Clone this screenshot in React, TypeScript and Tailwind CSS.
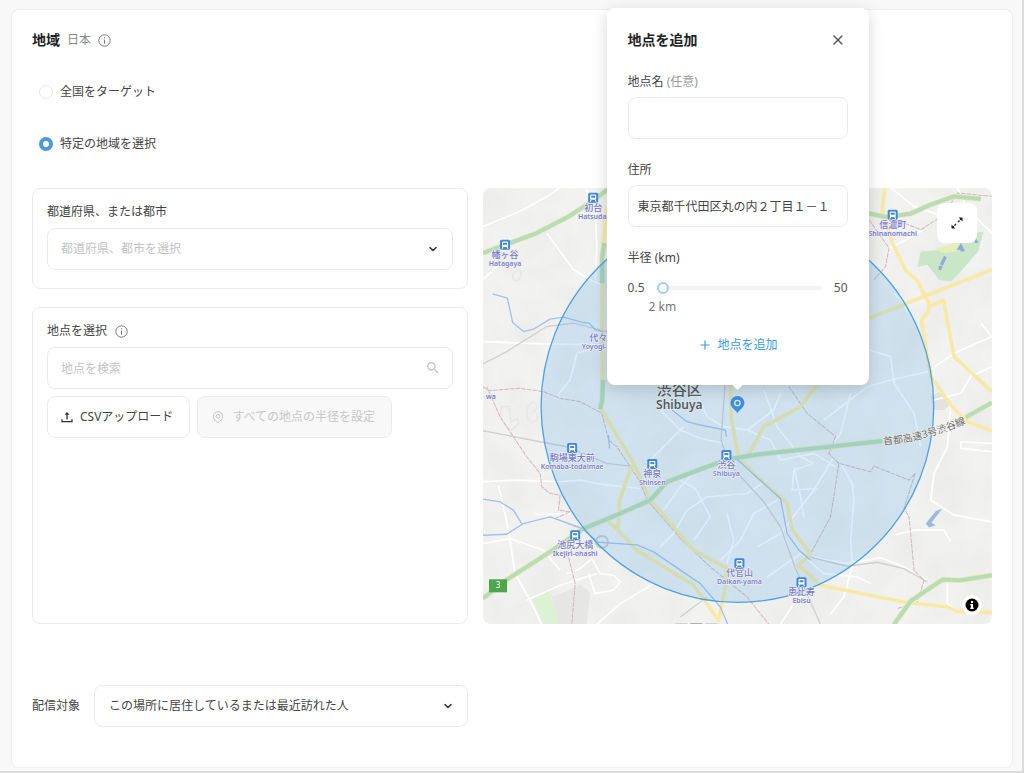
import { useState } from "react";
import type { ReactNode } from "react";
import { ChevronDown, Plus, X } from "lucide-react";
import { MdSearch } from "react-icons/md";

const FIELD = "h-[42px] w-full rounded-lg border border-[#ebebeb] bg-white text-xs text-[#444] outline-none placeholder:text-[#c4c4c4]";
const RADIO = "size-[14px] shrink-0 appearance-none rounded-full border border-[#e6e6e6] bg-white checked:border-4 checked:border-[#4a98e6]";

const STATIONS = [
  { ja: "初台", en: "Hatsudai", x: 110, y: 10 },
  { ja: "幡ヶ谷", en: "Hatagaya", x: 22, y: 57 },
  { ja: "信濃町", en: "Shinanomachi", x: 409, y: 27 },
  { ja: "駒場東大前", en: "Komaba-todaimae", x: 89, y: 260 },
  { ja: "神泉", en: "Shinsen", x: 169, y: 276 },
  { ja: "渋谷", en: "Shibuya", x: 243, y: 267 },
  { ja: "池尻大橋", en: "Ikejiri-ohashi", x: 92, y: 347 },
  { ja: "代官山", en: "Daikan-yama", x: 256, y: 375 },
  { ja: "恵比寿", en: "Ebisu", x: 318, y: 394 },
];

// Small streets, drawn in white
const STREETS = [
  "M9 140L120 95L210 45L240 24",
  "M200 160L240 215L280 270L340 305L365 315",
  "M320 30L345 100L350 200L345 300",
  "M9 300L60 250",
  "M9 485L180 492L370 495",
  "M225 655L270 600L290 520L365 500",
  "M9 905L110 900L240 905L300 900L360 912L480 925",
  "M55 915L75 1000L90 1080L105 1180L150 1260L185 1332",
  "M9 1090L90 1075L190 1110L240 1170",
  "M165 1003L270 1000",
  "M260 1180L300 1165L335 1135L360 1180L400 1185L420 1205L400 1230L345 1240L325 1180",
  "M140 1260L240 1215L350 1180",
  "M350 1332L420 1270L520 1210",
  "M540 690L600 750L660 775L730 790",
  "M610 740L560 790L500 850",
  "M650 640L680 710L730 740L800 750L880 690L900 640",
  "M850 630L890 740L960 830L1000 850",
  "M800 750L870 780L900 840L1000 820L1065 860",
  "M540 1100L580 1060L620 990L680 950L800 940L860 900",
  "M600 900L645 925L690 1010L640 1080",
  "M550 990L600 920L640 880",
  "M720 1140L780 1080L820 1000L890 960",
  "M740 1000L760 1080L740 1150",
  "M830 1100L900 1060L1000 930L1060 830",
  "M940 860L960 950L970 1010",
  "M1080 850L1115 910L1120 960L1110 1080L1115 1150",
  "M1165 510L1230 530L1240 610L1300 700L1320 800",
  "M1030 720L1160 620L1230 600L1340 575L1420 520L1533 470",
  "M1110 640L1080 760L1040 810",
  "M1430 24L1460 90L1533 160",
  "M1360 660L1440 640L1470 590L1533 560",
  "M1240 340L1270 370L1280 400",
  "M1500 430L1533 470",
  "M1410 670L1400 800L1360 880L1350 960L1420 1005L1533 1025",
  "M1533 790L1440 785L1440 805L1533 815",
  "M1240 1065L1300 1050L1390 1050L1410 1085",
  "M985 1130L1100 1150L1200 1132L1270 1160L1340 1200",
  "M860 1190L960 1120L1030 1180L1130 1190L1170 1210",
  "M1120 1140L1090 1250L1050 1300",
  "M1400 1200L1400 1270L1430 1295",
  "M900 1332L940 1270L1010 1215",
  "M1000 850L940 870L935 930L1010 925",
  "M1230 24L1300 80L1390 110",
  "M1230 205L1330 150",
];

const YELLOW_ROADS = [
  "M380 80L366 230L365 690L460 850L510 960L640 1110L740 1165",
  "M455 855L418 960L413 1050L380 1020",
  "M413 1050L470 1110L640 1215L715 1320L735 1220L738 1165",
  "M750 600L752 710L775 835L830 890L920 970L935 1050L990 1120L945 1165",
  "M950 1150L1020 1215L1270 1265L1400 1280L1430 1293L1533 1296",
  "M1010 615L960 680L850 740L800 832",
  "M1213 24L1205 90L1235 190L1275 272L1308 300L1345 370L1342 395L1322 420L1350 590L1410 675L1460 725L1533 752",
  "M1165 415L1330 350L1533 270",
  "M1345 380L1388 362L1420 530L1533 635",
];

const GREEN_ROADS = [
  "M9 220L170 160L270 108L335 65L390 24",
  "M9 1254L80 1198L210 1115L310 1045L420 1000L510 960L560 905L640 875L740 838L840 822L1205 783",
  "M1455 712L1533 668",
  "M1160 100L1215 112L1290 102L1350 75L1420 50L1500 58",
  "M1240 1332L1290 1262L1385 1198L1440 1200L1533 1185",
  "M372 190L366 230L366 310",
  "M368 600L366 660L360 688",
];

const RIVERS = [
  "M38 342L82 355L98 428L130 455L160 448L210 418L250 412L310 428L328 430L345 450L370 455",
  "M9 957L60 965L100 990L125 1030",
  "M9 1065L80 1062L130 1030L210 1010L300 1042L355 1086L470 1094L520 1115L660 1210L720 1280L742 1332",
  "M770 838L900 955L920 1060L955 1110L990 1140",
  "M575 690L620 725L660 735L735 750L738 770",
  "M385 765L388 805",
];

const BORDERS = [
  "M9 620L25 632L120 625L190 635L240 655L300 665L365 700L385 780L410 800L470 890L505 965L580 1050L600 1075L690 1160L800 1250L865 1332",
  "M20 620L60 710L140 830L180 880L185 920L210 940L240 945L235 990L270 995L225 1015L300 1045L265 1130L285 1210L275 1332",
  "M925 620L980 700L1065 770L1045 820L1075 850L1170 875L1180 858L1285 900L1303 880L1270 985L1285 1010L1300 1170L1330 1200L1310 1265L1250 1285",
  "M1075 850L1050 1010L985 1130L945 1165",
  "M1165 120L1225 205L1215 260L1180 300",
  "M1225 112L1320 150L1390 105L1430 40L1533 50",
];

const RAILS = [
  "M9 552L80 515L200 440L280 430L380 455",
  "M9 752L180 785L260 800L380 850L450 858",
  "M735 600L722 780L745 850L850 965L900 1040L945 1165L1020 1332",
  "M985 1130L1100 1158L1190 1146L1270 1165L1340 1205",
  "M600 1310L680 1250",
];

function InfoIcon() {
  return (
    <svg className="size-[13px]" viewBox="0 0 13 13" fill="none" stroke="#777" aria-hidden="true">
      <circle cx="6.5" cy="6.5" r="5.7" />
      <path d="M6.5 5.7v4M6.5 3.3v1.2" />
    </svg>
  );
}

function UploadIcon() {
  return (
    <svg className="size-3" viewBox="0 0 12 12" fill="none" stroke="#333" strokeWidth="1.3" aria-hidden="true">
      <path d="M1 8.2v2.4h10V8.2M6 8.4V3" />
      <path d="M3.6 3.8L6 1l2.4 2.8z" fill="#333" stroke="none" />
    </svg>
  );
}

function PinOutlineIcon() {
  return (
    <svg className="h-[13px] w-3" viewBox="0 0 12 13" fill="none" stroke="currentColor" aria-hidden="true">
      <path d="M6 12.2C3.800 10 1.300 7.900 1.300 5.300a4.700 4.700 0 0 1 9.400 0C10.700 7.900 8.200 10 6 12.200z" />
      <circle cx="6" cy="5.3" r="1.9" />
    </svg>
  );
}

function ExpandIcon() {
  return (
    <svg className="size-3" viewBox="0 0 12 12" stroke="#222" strokeWidth="1.3" fill="#222" aria-hidden="true">
      <path d="M7 5l3-3M5 7l-3 3" strokeDasharray="2.2 .8" />
      <path d="M7.6.5h3.9v3.9zM4.4 11.5H.5V7.6z" stroke="none" />
    </svg>
  );
}

function Lines({ paths, color, width, dash }: { paths: string[]; color: string; width: number; dash?: string }) {
  return (
    <g fill="none" stroke={color} strokeWidth={width} strokeLinejoin="round" strokeDasharray={dash}>
      {paths.map((d) => (
        <path key={d} d={d} />
      ))}
    </g>
  );
}

function MapCanvas() {
  return (
    <svg
      className="absolute inset-0 size-full rounded-lg"
      viewBox="0 0 508 436"
      preserveAspectRatio="xMidYMid slice"
      role="img"
      aria-label="渋谷区の地図"
    >
      <defs>
        <filter id="terrain" x="0" y="0" width="100%" height="100%">
          <feTurbulence type="fractalNoise" baseFrequency="0.025" numOctaves="3" seed="4" />
          <feColorMatrix values="0 0 0 0 .55  0 0 0 0 .56  0 0 0 0 .54  .25 0 0 0 -.08" />
        </filter>
        <path id="expressway" d="M400 257Q440 254 488 233" />
      </defs>
      <rect width="508" height="436" fill="#f2f2f1" />
      <rect width="508" height="436" filter="url(#terrain)" />

      {/* Geometry is stored at three units per pixel */}
      <g transform="translate(-3 -8) scale(.33333)">
        <path d="M155 1250L205 1230L240 1332H190z" fill="#dcf2d2" />
        <path d="M215 1250L300 1215L330 1235L320 1332H235z" fill="#e6e6e5" />
        <path d="M1350 650L1375 635L1410 670L1390 690H1355z" fill="#e2e2e1" />
        <path d="M1320 215L1390 210L1485 160L1508 155L1492 215L1440 275L1410 305L1375 300L1340 255L1310 262z" fill="#c9e6c7" />
        <path d="M1365 205L1440 185L1430 215L1385 220z" fill="#e3f0bd" />
        <path d="M1390 228l8 6-12 24-8-5zM1375 258h10l-4 14-8-3zM1440 190l12 22-7 5-10-8-8 2zM1485 175l8 15h-12z" fill="#8ea9dc" />
        <path d="M1385 985L1365 993L1335 1030L1345 1042L1365 1035L1352 1028z" fill="#9bb9e4" />
        <g fill="none" stroke="#e7e8e4" strokeWidth="5">
          <path d="M65 680c-10 35 10 60 30 70l22-20-5-15-20 10-5-45zM150 670c-15 20-10 55 5 55 25 0 20-30 5-30 20-15 5-35-10-25z" />
          <path d="M100 280c-10 25 15 30 22 10s-12-25-22-10" />
        </g>
        <Lines paths={STREETS} color="#ffffff" width={5} />
        <Lines paths={RAILS} color="#d0d0d0" width={4} />
        <Lines paths={BORDERS} color="#d3b8bb" width={3} dash="14 3" />
        <Lines paths={YELLOW_ROADS} color="#f8eaa6" width={11} />
        <Lines paths={GREEN_ROADS} color="#efeaae" width={17} />
        <Lines paths={GREEN_ROADS} color="#b7dcbb" width={12} />
        <Lines paths={RIVERS} color="#a3c1ec" width={4} />
        <circle cx="365" cy="1085" r="18" fill="none" stroke="#c7cbca" strokeWidth="6" />
      </g>

      <circle cx="254" cy="218" r="196" fill="#4aa3e6" fillOpacity=".2" stroke="#4ea2e3" strokeWidth="1.3" />

      <g fontSize="10" fill="#6d6d69" stroke="#f4f4f2" strokeWidth="1" paintOrder="stroke">
        <text>
          <textPath href="#expressway">首都高速3号渋谷線</textPath>
        </text>
      </g>

      <g textAnchor="middle" fill="#7c7cc8" stroke="#f3f5f8" strokeWidth="1" paintOrder="stroke">
        {STATIONS.map((s) => (
          <g key={s.en}>
            <g stroke="none">
              <rect x={s.x - 5} y={s.y - 5} width="10" height="10" rx="1.5" fill="#4287d9" />
              <rect x={s.x - 3} y={s.y - 3.2} width="6" height="5.4" rx="1" fill="#fff" />
              <rect x={s.x - 2} y={s.y - 2} width="4" height="2" fill="#4287d9" />
              <path d={`M${s.x - 2} ${s.y + 2}l-1 2M${s.x + 2} ${s.y + 2}l1 2`} stroke="#fff" />
            </g>
            <text x={s.x} y={s.y + 13} fontSize="9" fontWeight="500">{s.ja}</text>
            <text x={s.x} y={s.y + 21} fontSize="7" fontWeight="600">{s.en}</text>
          </g>
        ))}
        <text x="115" y="153" fontSize="9" fontWeight="500">代々</text>
        <text x="111" y="161" fontSize="7" fontWeight="600">Yoyogi-</text>
        <text x="8" y="211" fontSize="7" fontWeight="600">wa</text>
      </g>

      <g textAnchor="middle" fill="#555b61" stroke="#e3edf4" strokeWidth="1" paintOrder="stroke">
        <text x="196" y="207" fontSize="15" fontWeight="500">渋谷区</text>
        <text x="196" y="221" fontSize="12" fontWeight="600">Shibuya</text>
      </g>

      <rect x="6" y="391" width="18" height="13" fill="#4ea54b" />
      <text x="15" y="400" fontSize="8" fill="#fff" textAnchor="middle">3</text>
      <path d="M192 435.500h12M222 435.500h12" stroke="#c8c8c8" />
      <path d="M207 435.500h12" stroke="#8c8c8c" />

      <path d="M254 225c-3-4-7-6-7-10a7 7 0 0 1 14 0c0 4-4 6-7 10z" fill="#3f8fe0" />
      <circle cx="254" cy="215" r="2.7" fill="none" stroke="#d8ebfb" strokeWidth="1.3" />
    </svg>
  );
}

function Field({ label, htmlFor, children }: { label: ReactNode; htmlFor: string; children: ReactNode }) {
  return (
    <div>
      <label htmlFor={htmlFor} className="block text-xs text-[#444]">{label}</label>
      {children}
    </div>
  );
}

function AddPointPopup() {
  const [name, setName] = useState("");
  const [address, setAddress] = useState("東京都千代田区丸の内２丁目１－１");
  const [radius, setRadius] = useState(2);

  return (
    <div className="absolute bottom-[calc(50%+21px)] left-1/2 w-[262px] -translate-x-1/2 rounded-lg bg-white px-[21px] pt-[22px] pb-8 shadow-[0_4px_16px_rgba(0,0,0,0.16)]">
      <div className="flex items-center justify-between">
        <h3 className="text-sm font-bold text-[#222]">地点を追加</h3>
        <button type="button" aria-label="閉じる" className="mr-0.5 text-[#555]">
          <X className="size-4" strokeWidth={2} />
        </button>
      </div>

      <div className="mt-6 space-y-[23px]">
        <Field label={<>地点名 <span className="text-[#999]">(任意)</span></>} htmlFor="point-name">
          <input id="point-name" className={`${FIELD} mt-[7px] px-[9px]`} value={name} onChange={(e) => setName(e.target.value)} />
        </Field>
        <Field label="住所" htmlFor="point-address">
          <input id="point-address" className={`${FIELD} mt-[7px] px-[9px]`} value={address} onChange={(e) => setAddress(e.target.value)} />
        </Field>
        <Field label="半径 (km)" htmlFor="point-radius">
          <div className="mt-[14px] flex items-center text-xs text-[#555]">
            <span>0.5</span>
            <input
              id="point-radius"
              type="range"
              min={0.5}
              max={50}
              step={0.5}
              value={radius}
              onChange={(e) => setRadius(Number(e.target.value))}
              className="mx-2 h-4 min-w-0 flex-1 appearance-none bg-transparent [&::-webkit-slider-runnable-track]:h-1 [&::-webkit-slider-runnable-track]:rounded-full [&::-webkit-slider-runnable-track]:bg-[linear-gradient(to_right,transparent_6px,#f3f3f3_6px)] [&::-webkit-slider-thumb]:-mt-1 [&::-webkit-slider-thumb]:size-3 [&::-webkit-slider-thumb]:appearance-none [&::-webkit-slider-thumb]:rounded-full [&::-webkit-slider-thumb]:border-2 [&::-webkit-slider-thumb]:border-[#a3cbf7] [&::-webkit-slider-thumb]:bg-white"
            />
            <span className="ml-1">50</span>
          </div>
          <p className="mt-[3px] ml-[21px] text-xs text-[#777]">{radius} km</p>
        </Field>
      </div>

      <button type="button" className="mx-auto mt-[22px] flex items-center gap-1.5 text-xs text-[#3d9be0]">
        <Plus className="size-[14px]" strokeWidth={2} />
        地点を追加
      </button>
      <div className="absolute top-full left-1/2 h-[5px] w-[10px] -translate-x-1/2 bg-white [clip-path:polygon(0_0,100%_0,50%_100%)]" />
    </div>
  );
}

export default function App() {
  const [mode, setMode] = useState("area");

  return (
    <div className="flex min-h-screen flex-col border-r-2 border-b-2 border-[#dcdcdc] bg-[#f8f8f8] pt-[9px] pr-[9px] pb-[3px] pl-[11px] font-['Noto_Sans','Noto_Sans_CJK_JP',sans-serif] text-xs text-[#444]">
      <main className="flex-1 rounded-lg border border-[#efefef] bg-white px-5 pt-5 pb-10">
        <header className="flex items-center">
          <h2 className="text-sm font-bold text-[#222]">地域</h2>
          <span className="mx-[7px] text-[#888]">日本</span>
          <InfoIcon />
        </header>

        <fieldset className="mt-[34px] ml-[7px] space-y-9">
          <label className="flex items-center gap-[7px]">
            <input type="radio" name="target" className={RADIO} checked={mode === "all"} onChange={() => setMode("all")} />
            全国をターゲット
          </label>
          <label className="flex items-center gap-[7px]">
            <input type="radio" name="target" className={RADIO} checked={mode === "area"} onChange={() => setMode("area")} />
            特定の地域を選択
          </label>
        </fieldset>

        <div className="mt-9 grid min-h-[436px] grid-cols-[6fr_7fr] gap-[15px]">
          <div className="flex min-w-0 flex-col gap-[18px]">
            <section className="rounded-lg border border-[#ebebeb] px-[14px] pt-[15px] pb-[18px]">
              <label htmlFor="prefecture" className="block">都道府県、または都市</label>
              <div className="relative mt-2">
                <select id="prefecture" defaultValue="" className={`${FIELD} appearance-none px-[13px] text-[#c4c4c4]!`}>
                  <option value="">都道府県、都市を選択</option>
                </select>
                <ChevronDown className="pointer-events-none absolute top-[15px] right-[14px] size-3 text-[#333]" strokeWidth={3} />
              </div>
            </section>

            <section className="flex-1 rounded-lg border border-[#ebebeb] px-[14px] pt-[15px] pb-[18px]">
              <div className="flex items-center gap-2">
                <label htmlFor="point-search">地点を選択</label>
                <InfoIcon />
              </div>
              <div className="relative mt-2">
                <input id="point-search" type="search" placeholder="地点を検索" className={`${FIELD} px-[13px]`} />
                <MdSearch className="absolute top-[13px] right-3 size-4 text-[#c4c4c4]" />
              </div>
              <div className="mt-[7px] flex gap-[7px]">
                <button type="button" className="flex h-[42px] items-center gap-[7px] rounded-lg border border-[#ebebeb] bg-white pr-4 pl-[13px]">
                  <UploadIcon />
                  CSVアップロード
                </button>
                <button type="button" disabled className="flex h-[42px] items-center gap-2 rounded-lg border border-[#ebebeb] bg-[#f8f8f8] pr-4 pl-[14px] text-[#c8c8c8]">
                  <PinOutlineIcon />
                  すべての地点の半径を設定
                </button>
              </div>
            </section>
          </div>

          <div className="relative">
            <MapCanvas />
            <button type="button" aria-label="地図を拡大" className="absolute top-[15px] right-[15px] grid size-10 place-items-center rounded-lg bg-white">
              <ExpandIcon />
            </button>
            <button type="button" aria-label="地図の情報" className="absolute right-[10px] bottom-[9px] grid size-5 place-items-center rounded-full bg-white">
              <svg className="size-[14px]" viewBox="0 0 14 14" aria-hidden="true">
                <circle cx="7" cy="7" r="6.5" />
                <path d="M6 3h2v2H6zM5.300 6H8v3.500h.7V11H5.300V9.500H6v-2h-.7z" fill="#fff" />
              </svg>
            </button>
            <AddPointPopup />
          </div>
        </div>

        <div className="mt-[61px] grid grid-cols-[6fr_7fr] gap-[15px]">
          <div className="flex items-center gap-[14px]">
            <label htmlFor="audience" className="shrink-0">配信対象</label>
            <div className="relative flex-1">
              <select id="audience" className={`${FIELD} appearance-none px-[14px]`}>
                <option>この場所に居住しているまたは最近訪れた人</option>
              </select>
              <ChevronDown className="pointer-events-none absolute top-[15px] right-[14px] size-3 text-[#333]" strokeWidth={3} />
            </div>
          </div>
        </div>
      </main>
    </div>
  );
}
